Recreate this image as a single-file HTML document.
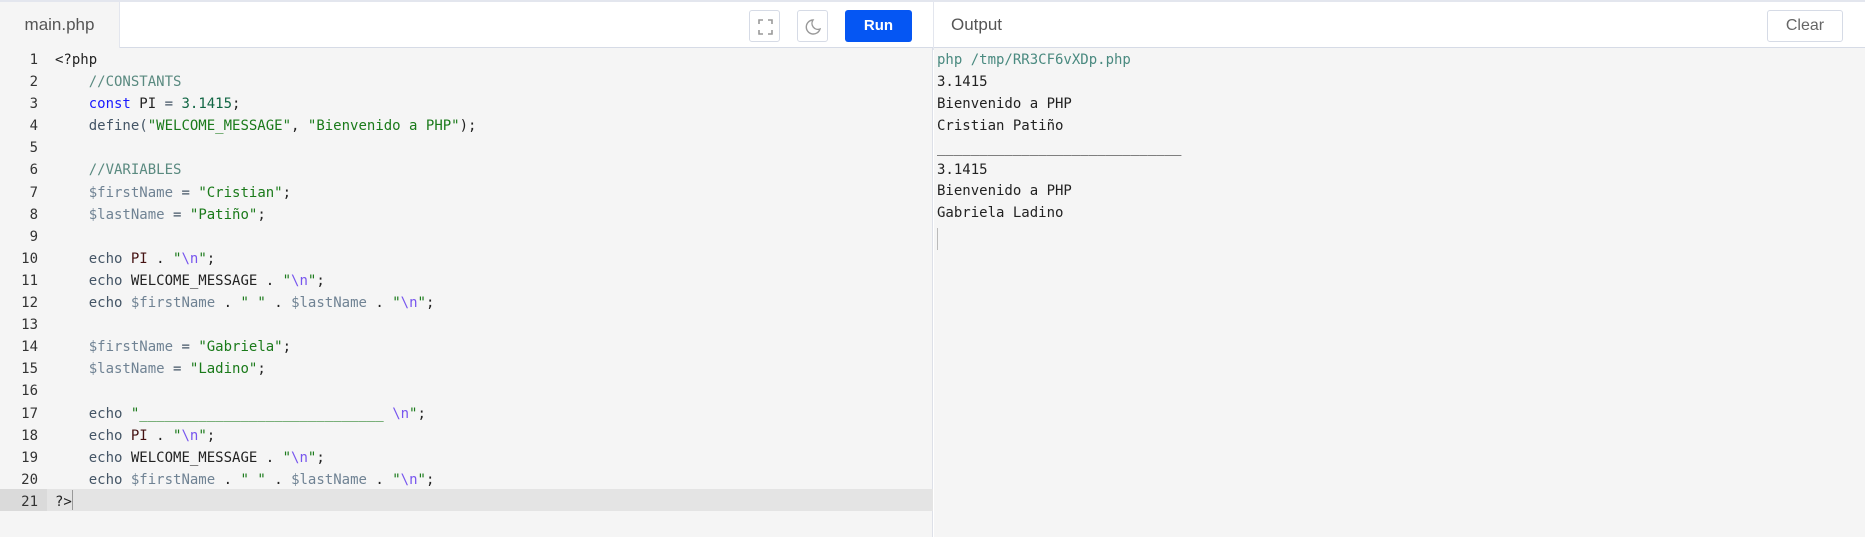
<!DOCTYPE html>
<html><head><meta charset="utf-8"><style>
*{margin:0;padding:0;box-sizing:border-box}
body{width:1865px;height:537px;background:#fff;font-family:"Liberation Sans",sans-serif;overflow:hidden;position:relative}
.top{position:absolute;left:0;top:0;width:1865px;height:48px;border-top:2px solid #e3e6ee;border-bottom:1px solid #d6dbe6;background:#fff}
.tab{position:absolute;left:0;top:0;width:120px;height:48px;background:#f5f5f5;border-right:1px solid #e3e6ee;color:#555;font-size:17px;line-height:46px;text-align:center}
.ib{position:absolute;top:8px;width:31px;height:32px;border:1px solid #d6dbe6;border-radius:3px;background:#fff}
.run{position:absolute;left:845px;top:8px;width:67px;height:32px;background:#0556f3;color:#fff;font-weight:bold;font-size:15px;line-height:32px;text-align:center;border-radius:3px}
.outh{position:absolute;left:951px;top:0;line-height:46px;color:#555;font-size:17px}
.clear{position:absolute;left:1767px;top:8px;width:76px;height:32px;border:1px solid #d6dbe6;border-radius:3px;color:#666;font-size:16px;line-height:30px;text-align:center}
.ed{position:absolute;left:0;top:48px;width:933px;height:489px;background:#f5f5f5;border-right:1px solid #dde0e8}
.out{position:absolute;left:934px;top:48px;width:931px;height:489px;background:#f5f5f5}
.code{position:absolute;top:1px;font-family:"DejaVu Sans Mono","Liberation Mono",monospace;font-size:14px;line-height:22.1px;white-space:pre}
.ln{left:0;width:38px;text-align:right;color:#333}
.act{position:absolute;left:0;top:441px;width:933px;height:22px;background:#e4e4e4}
.c{color:#5a8a80}.k{color:#1a1aff}.n{color:#116644}.s{color:#1a7a1a}.v{color:#708394}.e{color:#445566}.x{color:#7755ee}.d{color:#441111}.p{color:#222}
</style></head><body>
<div class="top">
<div class="tab">main.php</div>
<div class="ib" style="left:749px"><svg width="31" height="32" viewBox="0 0 31 32"><path d="M9 13V9h4M18 9h4v4M22 19v4h-4M13 23H9v-4" fill="none" stroke="#999" stroke-width="1.6"/></svg></div>
<div class="ib" style="left:797px"><svg width="31" height="32" viewBox="0 0 31 32"><path d="M15 9a7 7 0 1 0 7 9a6 6 0 0 1-7-9z" fill="none" stroke="#999" stroke-width="1.4"/></svg></div>
<div class="run">Run</div>
<div style="position:absolute;left:933px;top:0;width:1px;height:48px;background:#e3e6ee"></div>
<div class="outh">Output</div>
<div class="clear">Clear</div>
</div>
<div class="ed">
<div class="act"></div>
<div style="position:absolute;left:0;top:441px;width:47px;height:22px;background:#dadada"></div>
<div class="code ln">1
2
3
4
5
6
7
8
9
10
11
12
13
14
15
16
17
18
19
20
21</div>
<div class="code p" style="left:55px"><span class="p">&lt;?php</span>
    <span class="c">//CONSTANTS</span>
    <span class="k">const</span> PI <span class="e">=</span> <span class="n">3.1415</span>;
    <span class="e">define(</span><span class="s">"WELCOME_MESSAGE"</span>, <span class="s">"Bienvenido a PHP"</span>);

    <span class="c">//VARIABLES</span>
    <span class="v">$firstName</span> <span class="e">=</span> <span class="s">"Cristian"</span>;
    <span class="v">$lastName</span> <span class="e">=</span> <span class="s">"Patiño"</span>;

    <span class="e">echo</span> <span class="d">PI</span> . <span class="s">"</span><span class="x">\n</span><span class="s">"</span>;
    <span class="e">echo</span> <span class="p">WELCOME_MESSAGE</span> . <span class="s">"</span><span class="x">\n</span><span class="s">"</span>;
    <span class="e">echo</span> <span class="v">$firstName</span> . <span class="s">" "</span> . <span class="v">$lastName</span> . <span class="s">"</span><span class="x">\n</span><span class="s">"</span>;

    <span class="v">$firstName</span> <span class="e">=</span> <span class="s">"Gabriela"</span>;
    <span class="v">$lastName</span> <span class="e">=</span> <span class="s">"Ladino"</span>;

    <span class="e">echo</span> <span class="s">"_____________________________</span> <span class="x">\n</span><span class="s">"</span>;
    <span class="e">echo</span> <span class="d">PI</span> . <span class="s">"</span><span class="x">\n</span><span class="s">"</span>;
    <span class="e">echo</span> <span class="p">WELCOME_MESSAGE</span> . <span class="s">"</span><span class="x">\n</span><span class="s">"</span>;
    <span class="e">echo</span> <span class="v">$firstName</span> . <span class="s">" "</span> . <span class="v">$lastName</span> . <span class="s">"</span><span class="x">\n</span><span class="s">"</span>;
?&gt;</div>
<div style="position:absolute;left:72px;top:442px;width:1px;height:20px;background:#999"></div>
</div>
<div class="out">
<div class="code p" style="left:3px;top:2px;line-height:21.9px"><span style="color:#4a8a80">php /tmp/RR3CF6vXDp.php</span>
3.1415
Bienvenido a PHP
Cristian Patiño
_____________________________
3.1415
Bienvenido a PHP
Gabriela Ladino</div>
<div style="position:absolute;left:3px;top:180px;width:1px;height:22px;background:#bbb"></div>
</div>
</body></html>
